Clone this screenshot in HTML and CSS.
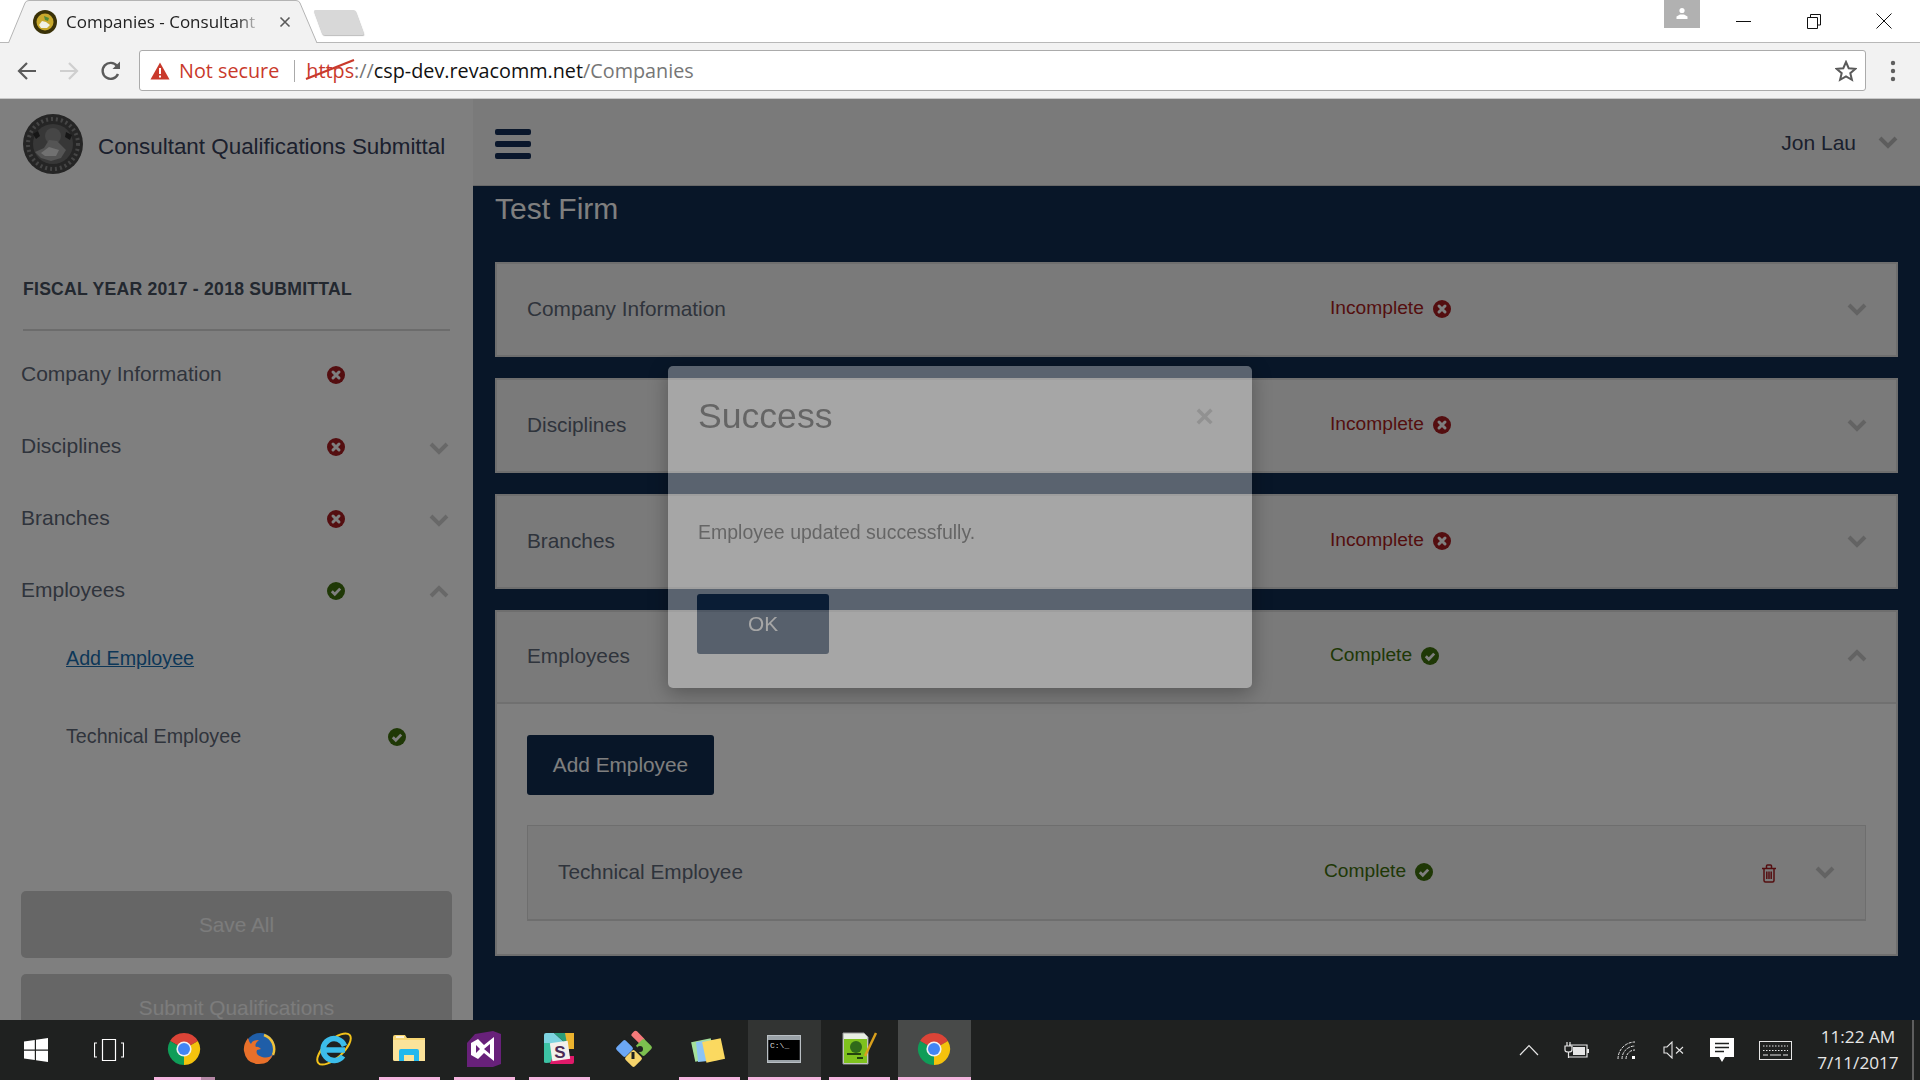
FILE: index.html
```html
<!DOCTYPE html>
<html>
  <head>
    <meta charset="utf-8">
    <title>Companies - Consultant Qualifications Submittal</title>
    <link rel="stylesheet" href="styles.css">
  </head>
  <body>
    <!-- shared icons -->
    <svg class="defs" width="0" height="0">
      <symbol id="ic_bad" viewBox="0 0 18 18">
        <circle cx="9" cy="9" r="9" fill="currentColor"></circle>
        <path d="M6 6l6 6M12 6l-6 6" stroke="#fff" stroke-width="3" stroke-linecap="round"></path>
      </symbol>
      <symbol id="ic_ok" viewBox="0 0 18 18">
        <circle cx="9" cy="9" r="9" fill="currentColor"></circle>
        <path d="M4.8 9.2l3 3 5.4-5.6" fill="none" stroke="#fff" stroke-width="2.8"></path>
      </symbol>
      <symbol id="ic_down" viewBox="0 0 20 14">
        <path d="M2 3l8 8 8-8" fill="none" stroke="currentColor" stroke-width="4"></path>
      </symbol>
      <symbol id="ic_up" viewBox="0 0 20 14">
        <path d="M2 11l8-8 8 8" fill="none" stroke="currentColor" stroke-width="4"></path>
      </symbol>
      <symbol id="ic_chrome" viewBox="0 0 34 34">
        <path d="M17 17L3.1 9A16 16 0 0 1 30.9 9z" fill="#db4437"></path>
        <path d="M17 17L30.9 9A16 16 0 0 1 17 33z" fill="#f4c20d"></path>
        <path d="M17 17L17 33A16 16 0 0 1 3.1 9z" fill="#0f9d58"></path>
        <circle cx="17" cy="17" r="7.6" fill="#f1f1f1"></circle>
        <circle cx="17" cy="17" r="6" fill="#4285f4"></circle>
      </symbol>
    </svg>

    <div class="tabstrip">
      <div class="tab">
        <svg class="tab_shape" width="312" height="43" viewBox="0 0 312 43">
          <path d="M0.5 43L17 3Q18 0.5 21 0.5H288Q291 0.5 292 3L309 43" fill="#f2f2f2" stroke="#b4b4b4"></path>
        </svg>
        <svg class="favicon" width="24" height="24" viewBox="0 0 24 24">
          <circle cx="12" cy="12" r="12" fill="#3a3208"></circle>
          <circle cx="12" cy="12" r="8.5" fill="#c9a92c"></circle>
          <path d="M6 15l3-4 4 1 4 3-3 3H8z" fill="#f1f1e6"></path>
          <path d="M11 6l5 2-1 3-3-1z" fill="#4f8a3a"></path>
        </svg>
        <span class="tab_title">Companies - Consultant</span>
        <svg class="tab_close" width="12" height="12" viewBox="0 0 12 12">
          <path d="M1.5 1.5l9 9M10.5 1.5l-9 9" stroke="#5a5a5a" stroke-width="1.6"></path>
        </svg>
      </div>
      <div class="newtab"></div>
      <div class="avatar">
        <svg width="16" height="16" viewBox="0 0 16 16">
          <circle cx="8" cy="4.5" r="2.6" fill="#fff"></circle>
          <path d="M2.5 13V10.5L6 8.5H10L13.5 10.5V13z" fill="#fff"></path>
        </svg>
      </div>
      <div class="winctl">
        <svg width="16" height="16" viewBox="0 0 16 16"><path d="M0 8.5H15" stroke="#111" stroke-width="1"></path></svg>
        <svg width="16" height="16" viewBox="0 0 16 16"><path d="M1.5 4.5H11.5V15.5H1.5zM4.5 4V1.5H14.5V12H12" fill="none" stroke="#111" stroke-width="1"></path></svg>
        <svg width="16" height="16" viewBox="0 0 16 16"><path d="M0.5 0.5L15.5 15.5M15.5 0.5L0.5 15.5" stroke="#111" stroke-width="1"></path></svg>
      </div>
    </div>

    <div class="toolbar">
      <svg width="24" height="24" viewBox="0 0 24 24"><path d="M21 12H5M12 4l-8 8 8 8" fill="none" stroke="#5a5a5a" stroke-width="2.2"></path></svg>
      <svg width="24" height="24" viewBox="0 0 24 24"><path d="M3 12H19M12 4l8 8-8 8" fill="none" stroke="#cfcfcf" stroke-width="2.2"></path></svg>
      <svg width="24" height="24" viewBox="0 0 24 24"><path d="M19 15A8 8 0 1 1 18 7" fill="none" stroke="#5a5a5a" stroke-width="2.4"></path><path d="M21 2.5V10H13.5z" fill="#5a5a5a"></path></svg>
      <div class="omnibox">
        <svg width="20" height="18" viewBox="0 0 20 18"><path d="M10 0.5L19.5 17.5H0.5z" fill="#c9392b"></path><path d="M10 6v6M10 13.5v2" stroke="#fff" stroke-width="2"></path></svg>
        <span class="not_secure">Not secure</span>
        <span class="omni_sep"></span>
        <span class="url">
          <span class="url_https">https</span><span class="url_dim">://</span>csp-dev.revacomm.net<span class="url_dim">/Companies</span>
          <svg class="url_strike" width="50" height="22" viewBox="0 0 50 22"><path d="M1 20L49 1" stroke="#c9392b" stroke-width="2.2"></path></svg>
        </span>
        <svg class="star" width="22" height="22" viewBox="0 0 22 22"><path d="M11 2l2.7 6.2 6.8.6-5.2 4.4 1.6 6.6L11 16.3l-5.900 3.500 1.600-6.600L1.500 8.800l6.800-.6z" fill="none" stroke="#5a5a5a" stroke-width="2"></path></svg>
      </div>
      <svg class="kebab" width="6" height="22" viewBox="0 0 6 22"><circle cx="3" cy="3" r="2.200" fill="#5f5f5f"></circle><circle cx="3" cy="11" r="2.200" fill="#5f5f5f"></circle><circle cx="3" cy="19" r="2.200" fill="#5f5f5f"></circle></svg>
    </div>

    <div class="page">
      <aside class="sidebar">
        <div class="brand">
          <svg width="60" height="60" viewBox="0 0 60 60">
            <circle cx="30" cy="30" r="30" fill="#4a4a4a"></circle>
            <circle cx="30" cy="30" r="25" fill="none" stroke="#8a8a8a" stroke-width="4" stroke-dasharray="2 3"></circle>
            <circle cx="30" cy="30" r="20" fill="#6e6e6e"></circle>
            <circle cx="30" cy="22" r="8" fill="#8c8c8c"></circle>
            <path d="M12 38l9-4 5-8 8 1 9 9-5 8-10 3-10-3z" fill="#a8a8a8"></path>
            <path d="M18 39l8-6 10 3-3 6H22z" fill="#e2e2e2"></path>
            <path d="M10 20l5-3 2 5-4 3zM43 18l6 3-2 5-5-3z" fill="#2c2c2c"></path>
          </svg>
          <span class="brand_title">Consultant Qualifications Submittal</span>
        </div>
        <h2 class="fiscal">Fiscal Year 2017 - 2018 Submittal</h2>
        <nav class="side_nav">
          <div class="side_row">
            <span>Company Information</span>
            <svg class="st_icon bad"><use href="#ic_bad"></use></svg>
          </div>
          <div class="side_row">
            <span>Disciplines</span>
            <svg class="st_icon bad"><use href="#ic_bad"></use></svg>
            <svg class="chev side_chev"><use href="#ic_down"></use></svg>
          </div>
          <div class="side_row">
            <span>Branches</span>
            <svg class="st_icon bad"><use href="#ic_bad"></use></svg>
            <svg class="chev side_chev"><use href="#ic_down"></use></svg>
          </div>
          <div class="side_row">
            <span>Employees</span>
            <svg class="st_icon ok"><use href="#ic_ok"></use></svg>
            <svg class="chev side_chev"><use href="#ic_up"></use></svg>
          </div>
          <div class="side_sub side_link"><a href="#">Add Employee</a></div>
          <div class="side_sub">
            <span>Technical Employee</span>
            <svg class="st_icon ok"><use href="#ic_ok"></use></svg>
          </div>
        </nav>
        <div class="side_btns">
          <div class="side_btn">Save All</div>
          <div class="side_btn">Submit Qualifications</div>
        </div>
      </aside>

      <main class="content">
        <header class="topbar">
          <div class="burger"><i></i><i></i><i></i></div>
          <span class="user">Jon Lau</span>
          <svg class="chev user_chev"><use href="#ic_down"></use></svg>
        </header>
        <div class="body_wrap">
          <h1 class="firm">Test Firm</h1>

          <section class="panel">
            <div class="panel_head">
              <span>Company Information</span>
              <span class="status bad">Incomplete <svg class="st_icon"><use href="#ic_bad"></use></svg></span>
              <svg class="chev"><use href="#ic_down"></use></svg>
            </div>
          </section>
          <section class="panel">
            <div class="panel_head">
              <span>Disciplines</span>
              <span class="status bad">Incomplete <svg class="st_icon"><use href="#ic_bad"></use></svg></span>
              <svg class="chev"><use href="#ic_down"></use></svg>
            </div>
          </section>
          <section class="panel">
            <div class="panel_head">
              <span>Branches</span>
              <span class="status bad">Incomplete <svg class="st_icon"><use href="#ic_bad"></use></svg></span>
              <svg class="chev"><use href="#ic_down"></use></svg>
            </div>
          </section>
          <section class="panel">
            <div class="panel_head open">
              <span>Employees</span>
              <span class="status ok">Complete <svg class="st_icon"><use href="#ic_ok"></use></svg></span>
              <svg class="chev"><use href="#ic_up"></use></svg>
            </div>
            <div class="panel_body">
              <div class="btn_primary">Add Employee</div>
              <div class="subpanel">
                <span>Technical Employee</span>
                <span class="status ok">Complete <svg class="st_icon"><use href="#ic_ok"></use></svg></span>
                <svg class="trash" width="16" height="19" viewBox="0 0 16 19">
                  <path d="M1 4.500H15M3 4.500V16.500Q3 18 4.500 18H11.500Q13 18 13 16.500V4.500M5.500 4.500V2Q5.500 1 6.500 1H9.500Q10.500 1 10.500 2V4.500M5.800 7.500V15M8 7.500V15M10.200 7.500V15" fill="none" stroke="currentColor" stroke-width="1.500"></path>
                </svg>
                <svg class="chev"><use href="#ic_down"></use></svg>
              </div>
            </div>
          </section>
        </div>
      </main>

      <div class="backdrop">
        <div class="modal">
          <div class="modal_head">
            <span class="modal_title">Success</span>
            <span class="modal_close">&times;</span>
          </div>
          <p class="modal_text">Employee updated successfully.</p>
          <div class="modal_ok">OK</div>
        </div>
      </div>
    </div>

    <div class="taskbar">
      <div class="task_start">
        <svg width="24" height="24" viewBox="0 0 24 24"><path d="M0 3.500L10.800 2V11.500H0zM12 1.800L24 0V11.500H12zM0 12.700H10.800V22L0 20.500zM12 12.700H24V24L12 22.200z" fill="#fff"></path></svg>
      </div>
      <div class="task_view">
        <svg width="30" height="24" viewBox="0 0 30 24"><path d="M8.500 1.500H21.500V22.500H8.500zM3 5H0.500V19H3M27 5H29.500V19H27" fill="none" stroke="#fff" stroke-width="1.200"></path></svg>
      </div>
      <div class="task running split"><svg width="34" height="34"><use href="#ic_chrome"></use></svg></div>
      <div class="task">
        <svg width="34" height="34" viewBox="0 0 34 34">
          <circle cx="18" cy="16" r="15" fill="#1f5ea8"></circle>
          <path d="M22 3a15 15 0 0 1 9 20" fill="none" stroke="#f0c23a" stroke-width="2.500"></path>
          <path d="M6 6Q1 13 2 19Q4 32 17 32Q28 32 31 22Q27 27 20 25Q13 23 15 18L19 17Q16 14 14 15Q12 12 17 8Q10 8 9 12Q7 10 6 6z" fill="#e8702a"></path>
        </svg>
      </div>
      <div class="task">
        <svg width="36" height="36" viewBox="0 0 36 36">
          <ellipse cx="18" cy="18" rx="21" ry="9" transform="rotate(-42 18 18)" fill="none" stroke="#f2c21a" stroke-width="2"></ellipse>
          <path d="M8 19H29M27 25A11 11 0 1 1 28.500 15" fill="none" stroke="#3cbdea" stroke-width="5.500"></path>
        </svg>
      </div>
      <div class="task running">
        <svg width="34" height="30" viewBox="0 0 34 30">
          <path d="M1 3Q1 1 3 1H13L15 4H33V27H3Q1 27 1 25z" fill="#f7d774"></path>
          <path d="M1 6H33V27H3Q1 27 1 25z" fill="#fbe39a"></path>
          <path d="M4 3H12" stroke="#fff" stroke-width="1.500"></path>
          <path d="M7 27V17Q7 15 9 15H25Q27 15 27 17V27H22V21H12V27z" fill="#22b8ee"></path>
        </svg>
      </div>
      <div class="task running">
        <svg width="34" height="36" viewBox="0 0 34 36"><path d="M26 0L34 3V33L26 36H0V12L8 3z" fill="#68217a"></path><path d="M4 12L11 8 17 14 27 6V30L17 22 11 28 4 24zM9 14V22L13 18zM17 18L23 23V13z" fill="#fff" fill-rule="evenodd"></path></svg>
      </div>
      <div class="task running">
        <svg width="32" height="32" viewBox="0 0 32 32">
          <path d="M1 2Q1 0 3 0H11L22 10H1z" fill="#7dd3e0"></path>
          <path d="M11 0H29Q31 0 31 2V16L22 10z" fill="#2a9d7a"></path>
          <path d="M1 10H10V29Q1 31 1 29z" fill="#3cc2a4"></path>
          <path d="M22 0H31V16H25z" fill="#ecb32e"></path>
          <path d="M10 23H31V29Q31 31 29 31H7z" fill="#e01a6a"></path>
          <rect x="8" y="9" width="18" height="18" transform="rotate(-8 17 18)" fill="#f2f0ec"></rect>
          <text x="17" y="24.500" class="slack_s">S</text>
        </svg>
      </div>
      <div class="task">
        <svg width="38" height="38" viewBox="0 0 38 38">
          <rect x="16" y="3" width="14" height="7" rx="2" transform="rotate(45 22 7)" fill="#f47a7a"></rect>
          <rect x="3" y="12" width="13" height="13" rx="2" transform="rotate(45 9.500 18.500)" fill="#6ba7f5"></rect>
          <rect x="22" y="11" width="13" height="13" rx="2" transform="rotate(45 28.500 17.500)" fill="#7cc04f"></rect>
          <rect x="12" y="22" width="13" height="13" rx="2" transform="rotate(45 18.500 28.500)" fill="#f5d36b"></rect>
          <path d="M12 7L24 22M18 22V29" stroke="#1f2120" stroke-width="3"></path>
          <circle cx="25" cy="19" r="3" fill="#1f2120"></circle>
        </svg>
      </div>
      <div class="task running">
        <svg width="36" height="32" viewBox="0 0 36 32">
          <rect x="2" y="7" width="20" height="20" transform="rotate(-12 12 17)" fill="#a4e09a"></rect>
          <rect x="6" y="8" width="20" height="20" transform="rotate(-6 16 18)" fill="#8cc4f4"></rect>
          <rect x="13" y="7" width="19" height="21" transform="rotate(-12 22 17)" fill="#fbd960"></rect>
        </svg>
      </div>
      <div class="task running active_dim">
        <svg width="34" height="28" viewBox="0 0 34 28">
          <rect x="0.500" y="0.500" width="33" height="27" fill="#000" stroke="#b9bfc4" stroke-width="1.500"></rect>
          <rect x="1" y="1" width="32" height="4" fill="#9aa2a8"></rect>
          <text x="3" y="13" class="cmd_text">C:\_</text>
          <rect x="1" y="25" width="32" height="2" fill="#9aa2a8"></rect>
        </svg>
      </div>
      <div class="task running">
        <svg width="36" height="34" viewBox="0 0 36 34">
          <path d="M2 1H23L27 5V32H2z" fill="#e8efe4" stroke="#9a9a9a"></path>
          <rect x="3" y="7" width="23" height="24" fill="#7fc21e"></rect>
          <circle cx="15" cy="15" r="6" fill="#2f6a1a"></circle>
          <path d="M6 22H20M16 26H22" stroke="#23430e" stroke-width="2"></path>
          <path d="M35 1L24 24" stroke="#d9a01c" stroke-width="2.500"></path>
        </svg>
      </div>
      <div class="task running active"><svg width="34" height="34"><use href="#ic_chrome"></use></svg></div>

      <div class="tray">
        <svg class="tray_chevron" width="20" height="12" viewBox="0 0 20 12"><path d="M1 11L10 1.500 19 11" fill="none" stroke="#e6e6e6" stroke-width="1.200"></path></svg>
        <svg class="tray_power" width="25" height="18" viewBox="0 0 25 18"><path d="M5 4H23V16H5" fill="none" stroke="#e6e6e6" stroke-width="1.200"></path><rect x="9" y="6" width="12" height="8" fill="#e6e6e6"></rect><rect x="23" y="8" width="2" height="4" fill="#e6e6e6"></rect><path d="M1 5H8V9Q8 11 4.500 11Q1 11 1 9zM3 1V5M6 1V5M4.500 11V17" fill="#1f2120" stroke="#e6e6e6" stroke-width="1.200"></path></svg>
        <svg class="tray_wifi" width="19" height="19" viewBox="0 0 19 19"><path d="M1 18A17 17 0 0 1 18 1M5 18A13 13 0 0 1 18 5M9 18A9 9 0 0 1 18 9" fill="none" stroke="#e6e6e6" stroke-width="1" stroke-dasharray="3 1"></path><rect x="15" y="15" width="3" height="3" fill="#fff"></rect></svg>
        <svg class="tray_sound" width="22" height="18" viewBox="0 0 22 18"><path d="M1 6H4L9 1V17L4 12H1z" fill="none" stroke="#e6e6e6" stroke-width="1.100"></path><path d="M13 6l7 6.500M20 6l-7 6.500" stroke="#e6e6e6" stroke-width="1.100"></path></svg>
        <svg class="tray_note" width="24" height="24" viewBox="0 0 24 24"><path d="M0 0H24V19H15L12 24 9 19H0z" fill="#fff"></path><path d="M5 5.500H19M5 9.500H19M5 13.500H14" stroke="#1f2120" stroke-width="1.300"></path></svg>
        <svg class="tray_keys" width="33" height="19" viewBox="0 0 33 19"><rect x="0.500" y="0.500" width="32" height="18" fill="none" stroke="#e6e6e6"></rect><path d="M4 5H29M4 9.500H29" stroke="#e6e6e6" stroke-dasharray="1.500 1.500"></path><path d="M4 14H9M11 14H22M24 14H29" stroke="#e6e6e6"></path></svg>
        <div class="clock">
          <span>11:22 AM</span>
          <span>7/11/2017</span>
        </div>
        <div class="show_desktop"></div>
      </div>
    </div>
  </body>
</html>
```

FILE: styles.css
```css
html, body {
  margin: 0;
  padding: 0;
  height: 100%;
  overflow: hidden;
  background: #fff;
}

body {
  display: flex;
  flex-direction: column;
  font-family: "Liberation Sans", Arial, sans-serif;
}

.defs {
  position: absolute;
}

svg {
  display: block;
  flex: none;
}

/* browser chrome */
.tabstrip {
  height: 42px;
  border-bottom: 1px solid #b8b8b8;
  display: flex;
  align-items: flex-start;
  flex: none;
}

.tab {
  position: relative;
  width: 310px;
  height: 43px;
  margin-left: 8px;
  display: flex;
  align-items: center;
  z-index: 1;
}

.tab_shape {
  position: absolute;
  left: 0;
  top: 0;
}

.favicon {
  position: relative;
  margin-left: 25px;
}

.tab_title {
  position: relative;
  width: 195px;
  margin-left: 9px;
  font-family: "Open Sans", sans-serif;
  font-size: 17px;
  color: #222;
  white-space: nowrap;
  overflow: hidden;
  -webkit-mask-image: linear-gradient(to right, #000 88%, transparent 100%);
  mask-image: linear-gradient(to right, #000 88%, transparent 100%);
}

.tab_close {
  position: relative;
  margin-left: 18px;
}

.newtab {
  width: 42px;
  height: 25px;
  margin: 10px 0 0 0;
  background: #d8d8d8;
  border-radius: 2px;
  box-shadow: 0 1px 1px #bbb;
  transform: skewX(20deg);
}

.avatar {
  width: 36px;
  height: 28px;
  margin-left: auto;
  background: #b1b1b1;
  display: flex;
  justify-content: center;
  align-items: center;
}

.winctl {
  display: flex;
  gap: 54px;
  margin: 13px 28px 0 36px;
}

.toolbar {
  height: 55px;
  flex: none;
  background: #f2f2f2;
  border-bottom: 1px solid #c8c8c8;
  display: flex;
  align-items: center;
  gap: 18px;
  padding-left: 15px;
}

.omnibox {
  width: 1715px;
  height: 39px;
  margin-left: -2px;
  background: #fff;
  border: 1px solid #ababab;
  border-radius: 3px;
  display: flex;
  align-items: center;
  padding-left: 10px;
  font-family: "Open Sans", sans-serif;
  font-size: 19.8px;
  color: #111;
}

.not_secure {
  margin-left: 9px;
  color: #c9392b;
}

.omni_sep {
  width: 1px;
  height: 22px;
  margin: 0 11px 0 15px;
  background: #aaa;
}

.url {
  position: relative;
  white-space: nowrap;
}

.url_https {
  color: #c9392b;
}

.url_dim {
  color: #767676;
}

.url_strike {
  position: absolute;
  left: -1px;
  top: 2px;
}

.star {
  margin-left: auto;
  margin-right: 8px;
}

.kebab {
  margin-left: 6px;
}

/* application page */
.page {
  position: relative;
  flex: 1;
  min-height: 0;
  display: flex;
  overflow: hidden;
  background: #112c50;
}

.sidebar {
  width: 473px;
  flex: none;
  background: #fff;
  color: #5f6878;
  font-size: 21px;
}

.brand {
  display: flex;
  align-items: center;
  gap: 15px;
  margin: 15px 0 0 23px;
  height: 60px;
}

.brand_title {
  font-size: 22.4px;
  color: #36405a;
  padding-top: 5px;
}

.fiscal {
  margin: 105px 23px 0;
  padding-bottom: 30px;
  border-bottom: 2px solid #d8d8d8;
  font-size: 17.6px;
  line-height: 20px;
  letter-spacing: 0.25px;
  text-transform: uppercase;
  color: #46505f;
}

.side_nav {
  margin: 7px 0 0 21px;
  width: 428px;
}

.side_row {
  height: 72px;
  display: grid;
  grid-template-columns: 306px 18px 1fr;
  align-items: center;
}

.side_chev {
  justify-self: end;
  margin-top: 4px;
  color: #d0d0d0;
}

.st_icon {
  width: 18px;
  height: 18px;
  margin-top: 2px;
}

.bad {
  color: #a81c20;
}

.ok {
  color: #3f700c;
}

.side_sub {
  height: 72px;
  padding-left: 45px;
  display: grid;
  grid-template-columns: 322px 18px;
  align-items: center;
  font-size: 19.7px;
}

.side_link {
  height: 64px;
  margin-bottom: 10px;
}

.side_link a {
  color: #1a6fb0;
}

.side_btns {
  margin: 119px 21px 0;
  display: flex;
  flex-direction: column;
  gap: 16px;
}

.side_btn {
  height: 67px;
  line-height: 67px;
  border-radius: 5px;
  background: #cdcdcd;
  color: #f8f8f8;
  text-align: center;
  font-size: 20.8px;
}

.content {
  flex: 1;
  min-width: 0;
}

.topbar {
  height: 87px;
  box-sizing: border-box;
  border-bottom: 1px solid #d0d0d0;
  background: #f5f5f5;
  display: flex;
  align-items: center;
  padding: 0 22px;
  font-size: 21px;
  color: #36405a;
}

.burger {
  display: flex;
  flex-direction: column;
  gap: 6px;
  margin-top: 4px;
}

.burger i {
  display: block;
  width: 36px;
  height: 6px;
  border-radius: 2px;
  background: #142e58;
}

.user {
  margin-left: auto;
  margin-top: 1px;
}

.user_chev {
  margin-left: 22px;
  color: #bbb;
}

.chev {
  width: 20px;
  height: 14px;
}

.body_wrap {
  padding: 0 22px;
}

.firm {
  margin: 5px 0 35px;
  font-size: 30px;
  line-height: 36px;
  font-weight: normal;
  color: #fff;
}

.panel {
  margin-bottom: 21px;
  background: #fff;
  border: 2px solid #dcdcdc;
  font-size: 20.8px;
  color: #5f6878;
}

.panel_head {
  height: 89px;
  background: #f5f5f5;
  display: grid;
  grid-template-columns: 803px 1fr 20px;
  align-items: center;
  padding: 0 29px 2px 30px;
}

.panel_head .chev {
  color: #c6c6c6;
}

.panel_head.open {
  height: 88px;
  border-bottom: 2px solid #e0e0e0;
}

.status {
  display: flex;
  align-items: center;
  gap: 9px;
  font-size: 19.2px;
  margin-bottom: 2px;
}

.panel_body {
  padding: 31px 30px 33px;
}

.btn_primary {
  width: 187px;
  height: 60px;
  line-height: 60px;
  border-radius: 3px;
  background: #112c50;
  color: #fff;
  text-align: center;
}

.subpanel {
  margin-top: 30px;
  height: 92px;
  background: #f5f5f5;
  border: 1px solid #dcdcdc;
  border-bottom-width: 2px;
  display: grid;
  grid-template-columns: 766px 1fr 20px 20px;
  column-gap: 36px;
  align-items: center;
  padding: 0 30px 1px;
}

.subpanel .status {
  margin-left: -36px;
}

.subpanel .chev {
  color: #c6c6c6;
}

.trash {
  color: #a81c20;
  justify-self: center;
  margin-top: 3px;
}

/* success dialog, caught part way through its fade */
.backdrop {
  position: absolute;
  inset: 0;
  background: rgba(0, 0, 0, 0.5);
}

.modal {
  position: absolute;
  left: 668px;
  top: 267px;
  width: 584px;
  box-sizing: border-box;
  padding: 30px 30px 34px;
  background: #fff;
  border-radius: 5px;
  box-shadow: 0 5px 20px rgba(0, 0, 0, 0.9);
  opacity: 0.33;
  color: #3d3d3d;
}

.modal_head {
  display: flex;
  justify-content: space-between;
  align-items: center;
  height: 40px;
}

.modal_title {
  font-size: 35.6px;
}

.modal_close {
  margin-right: 8px;
  font-size: 32px;
  font-weight: bold;
  color: #c2c2c2;
}

.modal_text {
  margin: 83px 0 0;
  font-size: 19.5px;
  line-height: 26px;
}

.modal_ok {
  width: 132px;
  height: 60px;
  margin: 49px 0 0 -1px;
  line-height: 60px;
  border-radius: 3px;
  background: #112c50;
  color: #fff;
  font-size: 20.8px;
  text-align: center;
}

/* windows taskbar */
.taskbar {
  height: 60px;
  flex: none;
  background: #1f2120;
  display: flex;
  gap: 2px;
  color: #e6e6e6;
}

.task_start,
.task_view {
  height: 100%;
  display: flex;
  align-items: center;
  justify-content: center;
}

.task_start {
  width: 72px;
  margin-right: -2px;
}

.task_view {
  width: 73px;
  margin-right: 1px;
}

.task {
  position: relative;
  width: 73px;
  height: 100%;
  display: flex;
  align-items: center;
  justify-content: center;
  padding: 0 2px 2px 0;
  box-sizing: border-box;
}

.task.running::after {
  content: "";
  position: absolute;
  left: 6px;
  right: 6px;
  bottom: 0;
  height: 3px;
  background: #f4b4de;
}

.task.split::after {
  background: linear-gradient(to right, #f4b4de 77%, #b588a6 77%);
}

.task.active_dim {
  background: #323433;
}

.task.active {
  background: #484a49;
}

.task.active_dim::after,
.task.active::after {
  left: 0;
  right: 0;
}

.slack_s {
  font-family: "Liberation Sans", sans-serif;
  font-size: 17px;
  font-weight: bold;
  text-anchor: middle;
  fill: #4a2a55;
}

.cmd_text {
  font-family: "Liberation Mono", monospace;
  font-size: 8px;
  fill: #ddd;
}

.tray {
  margin-left: auto;
  height: 100%;
  display: flex;
  align-items: center;
}

.tray_chevron {
  margin-right: 25px;
}

.tray_power {
  margin-right: 28px;
}

.tray_wifi {
  margin-right: 27px;
}

.tray_sound {
  margin-right: 25px;
}

.tray_note {
  margin-right: 25px;
}

.tray_keys {
  margin-right: 24px;
}

.clock {
  display: flex;
  flex-direction: column;
  align-items: center;
  gap: 4px;
  width: 84px;
  font-family: "Open Sans", sans-serif;
  font-size: 17.2px;
  line-height: 22px;
}

.show_desktop {
  width: 2px;
  height: 100%;
  margin: 0 6px 0 12px;
  background: #5e5e5e;
}
```
